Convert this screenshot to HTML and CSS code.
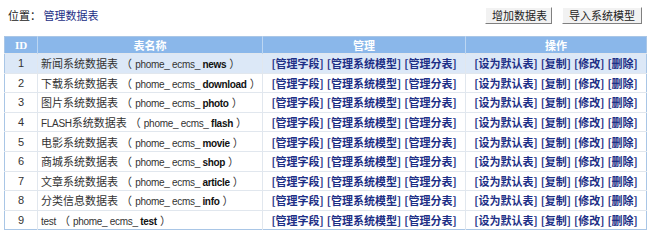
FILE: index.html
```html
<!DOCTYPE html>
<html>
  <head>
    <title>管理数据表</title>
    <link rel="stylesheet" href="styles.css">
  </head>
  <body>
    <div class="topbar">
      <div class="position">位置： <a href="#">管理数据表</a></div>
      <div class="actions">
        <button class="btn">增加数据表</button>
        <button class="btn">导入系统模型</button>
      </div>
    </div>
    <table class="list">
      <thead>
        <tr>
          <th class="col-id">ID</th>
          <th class="col-name">表名称</th>
          <th class="col-manage">管理</th>
          <th class="col-ops">操作</th>
        </tr>
      </thead>
      <tbody>
        <tr class="active">
          <td class="c">1</td>
          <td>新闻系统数据表 （ <span class="tb">phome_ ecms_ <b>news</b></span> ）</td>
          <td class="c"><a href="#">[管理字段]</a> <a href="#">[管理系统模型]</a> <a href="#">[管理分表]</a></td>
          <td class="c"><a href="#">[设为默认表]</a> <a href="#">[复制]</a> <a href="#">[修改]</a> <a href="#">[删除]</a></td>
        </tr>
        <tr>
          <td class="c">2</td>
          <td>下载系统数据表 （ <span class="tb">phome_ ecms_ <b>download</b></span> ）</td>
          <td class="c"><a href="#">[管理字段]</a> <a href="#">[管理系统模型]</a> <a href="#">[管理分表]</a></td>
          <td class="c"><a href="#">[设为默认表]</a> <a href="#">[复制]</a> <a href="#">[修改]</a> <a href="#">[删除]</a></td>
        </tr>
        <tr>
          <td class="c">3</td>
          <td>图片系统数据表 （ <span class="tb">phome_ ecms_ <b>photo</b></span> ）</td>
          <td class="c"><a href="#">[管理字段]</a> <a href="#">[管理系统模型]</a> <a href="#">[管理分表]</a></td>
          <td class="c"><a href="#">[设为默认表]</a> <a href="#">[复制]</a> <a href="#">[修改]</a> <a href="#">[删除]</a></td>
        </tr>
        <tr>
          <td class="c">4</td>
          <td><span class="tb">FLASH</span>系统数据表 （ <span class="tb">phome_ ecms_ <b>flash</b></span> ）</td>
          <td class="c"><a href="#">[管理字段]</a> <a href="#">[管理系统模型]</a> <a href="#">[管理分表]</a></td>
          <td class="c"><a href="#">[设为默认表]</a> <a href="#">[复制]</a> <a href="#">[修改]</a> <a href="#">[删除]</a></td>
        </tr>
        <tr>
          <td class="c">5</td>
          <td>电影系统数据表 （ <span class="tb">phome_ ecms_ <b>movie</b></span> ）</td>
          <td class="c"><a href="#">[管理字段]</a> <a href="#">[管理系统模型]</a> <a href="#">[管理分表]</a></td>
          <td class="c"><a href="#">[设为默认表]</a> <a href="#">[复制]</a> <a href="#">[修改]</a> <a href="#">[删除]</a></td>
        </tr>
        <tr>
          <td class="c">6</td>
          <td>商城系统数据表 （ <span class="tb">phome_ ecms_ <b>shop</b></span> ）</td>
          <td class="c"><a href="#">[管理字段]</a> <a href="#">[管理系统模型]</a> <a href="#">[管理分表]</a></td>
          <td class="c"><a href="#">[设为默认表]</a> <a href="#">[复制]</a> <a href="#">[修改]</a> <a href="#">[删除]</a></td>
        </tr>
        <tr>
          <td class="c">7</td>
          <td>文章系统数据表 （ <span class="tb">phome_ ecms_ <b>article</b></span> ）</td>
          <td class="c"><a href="#">[管理字段]</a> <a href="#">[管理系统模型]</a> <a href="#">[管理分表]</a></td>
          <td class="c"><a href="#">[设为默认表]</a> <a href="#">[复制]</a> <a href="#">[修改]</a> <a href="#">[删除]</a></td>
        </tr>
        <tr>
          <td class="c">8</td>
          <td>分类信息数据表 （ <span class="tb">phome_ ecms_ <b>info</b></span> ）</td>
          <td class="c"><a href="#">[管理字段]</a> <a href="#">[管理系统模型]</a> <a href="#">[管理分表]</a></td>
          <td class="c"><a href="#">[设为默认表]</a> <a href="#">[复制]</a> <a href="#">[修改]</a> <a href="#">[删除]</a></td>
        </tr>
        <tr>
          <td class="c">9</td>
          <td><span class="tb">test</span> （ <span class="tb">phome_ ecms_ <b>test</b></span> ）</td>
          <td class="c"><a href="#">[管理字段]</a> <a href="#">[管理系统模型]</a> <a href="#">[管理分表]</a></td>
          <td class="c"><a href="#">[设为默认表]</a> <a href="#">[复制]</a> <a href="#">[修改]</a> <a href="#">[删除]</a></td>
        </tr>
      </tbody>
    </table>
  </body>
</html>
```

FILE: styles.css
```css
/* 基础样式 */
* {
  box-sizing: border-box;
  margin: 0;
  padding: 0;
}

body {
  background: #fff;
  color: #333;
  font-family: "Liberation Sans", "Noto Sans CJK SC", sans-serif;
  font-size: 11px;
}

a {
  color: #1d2f86;
  text-decoration: none;
}

/* 顶部位置栏 */
.topbar {
  display: flex;
  justify-content: space-between;
  align-items: center;
  height: 30px;
  padding: 0 8px;
}

.position {
  font-family: "Noto Sans CJK SC", sans-serif;
  font-size: 11px;
  color: #222;
}

.actions {
  display: flex;
  gap: 10px;
}

.btn {
  height: 17px;
  padding: 0 6px;
  background: #f2f2f2;
  border: 1px solid;
  border-color: #fff #808080 #808080 #fff;
  font-family: "Noto Sans CJK SC", sans-serif;
  font-size: 11px;
  line-height: 15px;
  color: #222;
  white-space: nowrap;
}

.btn:first-child {
  width: 67px;
}

.btn:last-child {
  width: 80px;
}

/* 数据表列表 */
.list {
  width: 642px;
  margin: 6px 0 0 4px;
  table-layout: fixed;
  border-collapse: collapse;
  border: 1px solid #a9c6e6;
}

.list th {
  height: 17px;
  background: #8ab7ea;
  color: #fff;
  font-family: "Liberation Serif", "Noto Sans CJK SC", serif;
  font-size: 11px;
  font-weight: bold;
  border-left: 1px solid #bcd6f2;
}

.list th:first-child {
  border-left: none;
}

.col-id {
  width: 33px;
}

.col-name {
  width: 225px;
}

.col-manage {
  width: 203px;
}

.col-ops {
  width: 181px;
}

.list td {
  height: 19.6px;
  padding: 0 3px;
  border-top: 1px solid #e1e7ee;
  border-left: 1px solid #e1e7ee;
  white-space: nowrap;
  overflow: hidden;
}

.list td:first-child {
  border-left: none;
}

.list td.c {
  text-align: center;
}

.list td a {
  font-family: "Noto Sans CJK SC", sans-serif;
  font-weight: bold;
}

/* 表名里的英文部分字形偏窄 */
.tb {
  font-size: 10px;
  letter-spacing: -0.3px;
}

.list td b {
  color: #111;
}

.list tr.active td {
  background: #dce8f7;
}
```
